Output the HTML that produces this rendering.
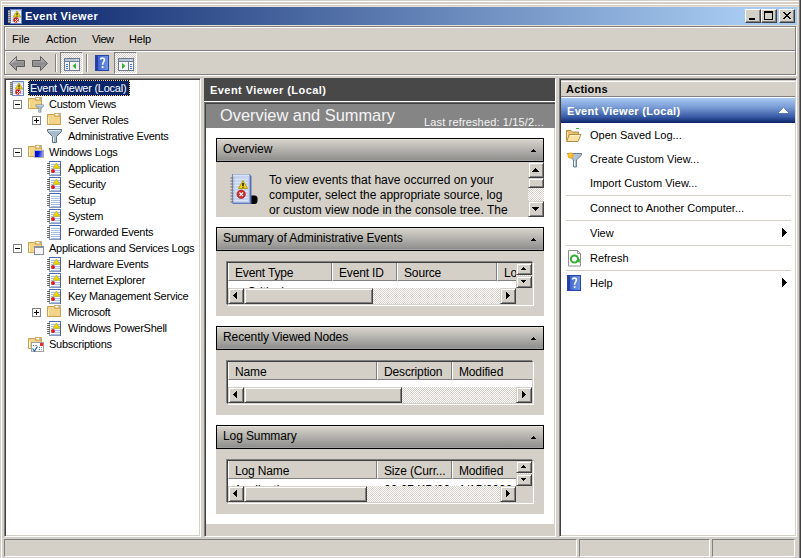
<!DOCTYPE html>
<html><head><meta charset="utf-8">
<style>
*{box-sizing:border-box}
html,body{margin:0;padding:0}
body{width:801px;height:558px;background:#D4D0C8;position:relative;overflow:hidden;font-family:"Liberation Sans",sans-serif;font-size:11px;color:#000}
.a{position:absolute}
.t{position:absolute;white-space:nowrap;line-height:16px}
.cb{position:absolute;top:9px;width:16px;height:14px;background:#D4D0C8;border-top:1px solid #fff;border-left:1px solid #fff;border-right:1px solid #404040;border-bottom:1px solid #404040;box-shadow:inset -1px -1px 0 #808080}
.dith{background-image:repeating-conic-gradient(#fff 0 25%,#D4D0C8 0 50%);background-size:2px 2px}
.ts{letter-spacing:-0.25px}
.b3{position:absolute;background:#D4D0C8;border:1px solid;border-color:#D4D0C8 #404040 #404040 #D4D0C8;box-shadow:inset 1px 1px 0 #fff,inset -1px -1px 0 #808080}
.hc{position:absolute;top:0;height:18px;background:#D4D0C8;border-left:1px solid #fff;border-right:1px solid #808080;border-bottom:1px solid #808080;font-size:12px;line-height:16px;white-space:nowrap;overflow:hidden;letter-spacing:-0.15px}
.sech{position:absolute;left:216px;width:328px;height:24px;border:1px solid #000;background:linear-gradient(#E6E2DC 0,#E6E2DC 1px,#D6D2CA 1px,#8F8F8D 21px,#A0A0A0 21px)}
.sect{position:absolute;left:6px;top:2px;font-size:12px;letter-spacing:-0.1px;line-height:16px;white-space:nowrap;color:#000}
.secc{position:absolute;left:216px;width:328px;background:#D4D0C8}
.lv{position:absolute;left:227px;width:306px;height:43px;background:#fff;border:1px solid;border-color:#404040 #D4D0C8 #D4D0C8 #404040;box-shadow:-1px -1px 0 #808080,1px 1px 0 #fff}
.lvi{position:absolute;left:0;top:0;width:304px;height:41px;overflow:hidden}
.sunk{border-top:1px solid #808080;border-left:1px solid #808080;border-right:1px solid #fff;border-bottom:1px solid #fff}
</style></head>
<body>
<!-- window frame -->
<div class="a" style="left:1px;top:1px;width:798px;height:1px;background:#fff"></div>
<div class="a" style="left:1px;top:4px;width:798px;height:1px;background:#fff"></div>
<div class="a" style="left:1px;top:1px;width:1px;height:557px;background:#fff"></div>
<div class="a" style="left:799px;top:0;width:1px;height:558px;background:#808080"></div>
<div class="a" style="left:800px;top:0;width:1px;height:558px;background:#404040"></div>

<!-- title bar -->
<div class="a" style="left:3px;top:6px;width:795px;height:20px;background:#E4DFD3"></div>
<div class="a" style="left:4px;top:7px;width:793px;height:18px;background:linear-gradient(to right,#0A246A,#A6CAF0 93%)"></div>
<svg class="a" style="left:6px;top:8px" width="16" height="16"><use href="#evico"/></svg>
<div class="t" style="left:25px;top:8px;color:#fff;font-weight:bold;font-size:11px;letter-spacing:0.4px">Event Viewer</div>
<div class="cb" style="left:745px"><div class="a" style="left:3px;top:8px;width:6px;height:2px;background:#000"></div></div>
<div class="cb" style="left:761px"><div class="a" style="left:2px;top:1px;width:9px;height:9px;border:1px solid #000;border-top-width:2px"></div></div>
<div class="cb" style="left:779px"><svg class="a" style="left:3px;top:2px" width="8" height="7"><path d="M0 0h1v1h-1zM1 0h1v1h-1zM6 0h1v1h-1zM7 0h1v1h-1zM1 1h1v1h-1zM2 1h1v1h-1zM5 1h1v1h-1zM6 1h1v1h-1zM2 2h1v1h-1zM3 2h1v1h-1zM4 2h1v1h-1zM5 2h1v1h-1zM3 3h1v1h-1zM4 3h1v1h-1zM2 4h1v1h-1zM3 4h1v1h-1zM4 4h1v1h-1zM5 4h1v1h-1zM1 5h1v1h-1zM2 5h1v1h-1zM5 5h1v1h-1zM6 5h1v1h-1zM0 6h1v1h-1zM1 6h1v1h-1zM6 6h1v1h-1zM7 6h1v1h-1z" fill="#000"/></svg></div>

<!-- menu band -->
<div class="a" style="left:4px;top:26px;width:792px;height:25px;border:1px solid #808080;box-shadow:1px 1px 0 #fff, inset 1px 1px 0 #fff"></div>
<div class="a" style="left:4px;top:50px;width:792px;height:25px;border:1px solid #808080;box-shadow:1px 1px 0 #fff, inset 1px 1px 0 #fff"></div>
<div class="t" style="left:12px;top:31px">File</div>
<div class="t" style="left:46px;top:31px">Action</div>
<div class="t" style="left:92px;top:31px;letter-spacing:-0.6px">View</div>
<div class="t" style="left:129px;top:31px;letter-spacing:-0.2px">Help</div>


<!-- toolbar -->
<svg class="a" style="left:8px;top:55px" width="18" height="17" viewBox="0 0 18 17">
 <defs><linearGradient id="ag" x1="0" y1="0" x2="0" y2="1"><stop offset="0" stop-color="#C8C8C8"/><stop offset=".5" stop-color="#8C8C8C"/><stop offset="1" stop-color="#A8A8A8"/></linearGradient></defs>
 <path d="M1.5 8.5L8.5 1.5V5.5H16.5V11.5H8.5V15.5Z" fill="url(#ag)" stroke="#5E5E5E" stroke-linejoin="round"/>
 <path d="M3 8.5L8 3.5" stroke="#E8E8E8" stroke-width=".8"/>
</svg>
<svg class="a" style="left:31px;top:55px" width="18" height="17" viewBox="0 0 18 17">
 <path d="M16.5 8.5L9.5 1.5V5.5H1.5V11.5H9.5V15.5Z" fill="url(#ag)" stroke="#5E5E5E" stroke-linejoin="round"/>
</svg>
<div class="a" style="left:55px;top:54px;width:1px;height:18px;background:#808080"></div>
<div class="a" style="left:56px;top:54px;width:1px;height:18px;background:#fff"></div>
<div class="a dith" style="left:60px;top:52px;width:23px;height:22px;border-top:1px solid #808080;border-left:1px solid #808080;border-right:1px solid #fff;border-bottom:1px solid #fff"></div>
<svg class="a" style="left:64px;top:58px" width="16" height="13" viewBox="0 0 16 13">
 <rect x=".5" y=".5" width="15" height="12" fill="#F4F4F4" stroke="#6C7C94"/>
 <rect x="1" y="1" width="14" height="2" fill="#B8C4D4"/><path d="M12 2h1M14 2h.5" stroke="#fff"/>
 <path d="M1 3.5h14" stroke="#6C7C94"/>
 <path d="M5.5 4v8" stroke="#6C7C94"/>
 <rect x="2" y="6" width="2" height="1" fill="#3C7CD0"/><rect x="2" y="8" width="2" height="1" fill="#3C7CD0"/><rect x="2" y="10" width="2" height="1" fill="#3C7CD0"/>
 <path d="M8.5 8L12 5V11Z" fill="#30B030"/>
</svg>
<div class="a" style="left:86px;top:54px;width:1px;height:18px;background:#808080"></div>
<div class="a" style="left:87px;top:54px;width:1px;height:18px;background:#fff"></div>
<svg class="a" style="left:95px;top:55px" width="14" height="16" viewBox="0 0 14 16">
 <defs><linearGradient id="hg" x1="0" y1="0" x2="1" y2="0"><stop offset="0" stop-color="#3858C8"/><stop offset="1" stop-color="#7098E8"/></linearGradient></defs>
 <rect x="0" y="0" width="14" height="16" fill="url(#hg)"/>
 <rect x="0" y="0" width="3" height="16" fill="#2440A8"/>
 <rect x=".5" y=".5" width="13" height="15" fill="none" stroke="#2844A8"/>
 <path d="M5.6 4.6C5.6 2.6 9.4 2.4 9.4 4.8C9.4 6.8 7.6 7 7.6 9.8" fill="none" stroke="#fff" stroke-width="1.6"/>
 <rect x="6.7" y="11.2" width="1.8" height="1.9" fill="#fff"/>
</svg>
<div class="a dith" style="left:114px;top:52px;width:23px;height:22px;border-top:1px solid #808080;border-left:1px solid #808080;border-right:1px solid #fff;border-bottom:1px solid #fff"></div>
<svg class="a" style="left:118px;top:58px" width="16" height="13" viewBox="0 0 16 13">
 <rect x=".5" y=".5" width="15" height="12" fill="#F4F4F4" stroke="#6C7C94"/>
 <rect x="1" y="1" width="14" height="2" fill="#B8C4D4"/><path d="M12 2h1M14 2h.5" stroke="#fff"/>
 <path d="M1 3.5h14" stroke="#6C7C94"/>
 <path d="M10.5 4v8" stroke="#6C7C94"/>
 <rect x="12" y="6" width="2" height="1" fill="#3C7CD0"/><rect x="12" y="8" width="2" height="1" fill="#3C7CD0"/><rect x="12" y="10" width="2" height="1" fill="#3C7CD0"/>
 <path d="M7.5 8L4 5V11Z" fill="#30B030"/>
</svg>

<!-- panes -->
<div class="a" style="left:4px;top:78px;width:197px;height:459px;background:#fff;border-top:1px solid #808080;border-left:1px solid #808080;border-right:1px solid #fff;border-bottom:1px solid #fff;box-shadow:inset 1px 1px 0 #404040, inset -1px -1px 0 #D4D0C8"></div>
<div class="a" style="left:204px;top:78px;width:352px;height:459px;background:#fff;border-top:1px solid #808080;border-left:1px solid #808080;border-right:1px solid #fff;border-bottom:1px solid #fff;box-shadow:inset 1px 1px 0 #404040, inset -1px -1px 0 #D4D0C8"></div>
<div class="a" style="left:559px;top:78px;width:238px;height:459px;background:#fff;border-top:1px solid #808080;border-left:1px solid #808080;border-right:1px solid #fff;border-bottom:1px solid #fff;box-shadow:inset 1px 1px 0 #404040, inset -1px -1px 0 #D4D0C8"></div>


<!-- svg defs -->
<svg width="0" height="0" style="position:absolute">
<defs>
<symbol id="evico" viewBox="0 0 16 16">
 <rect x="4" y="1" width="12" height="15" fill="#7088C8"/>
 <rect x="5" y="2" width="10" height="13" fill="#D4E0F4"/>
 <rect x="5" y="4" width="10" height="1" fill="#fff"/><rect x="5" y="6" width="10" height="1" fill="#fff"/><rect x="5" y="8" width="10" height="1" fill="#fff"/><rect x="5" y="10" width="10" height="1" fill="#fff"/><rect x="5" y="12" width="10" height="1" fill="#fff"/><rect x="5" y="14" width="10" height="1" fill="#fff"/>
 <rect x="2" y="2" width="3" height="1" fill="#787878"/><rect x="2" y="4" width="3" height="1" fill="#787878"/><rect x="2" y="6" width="3" height="1" fill="#787878"/><rect x="2" y="8" width="3" height="1" fill="#787878"/><rect x="2" y="10" width="3" height="1" fill="#787878"/><rect x="2" y="12" width="3" height="1" fill="#787878"/><rect x="2" y="14" width="3" height="1" fill="#787878"/>
 <rect x="2" y="3" width="2" height="1" fill="#B8B8B8"/><rect x="2" y="5" width="2" height="1" fill="#B8B8B8"/><rect x="2" y="7" width="2" height="1" fill="#B8B8B8"/><rect x="2" y="9" width="2" height="1" fill="#B8B8B8"/><rect x="2" y="11" width="2" height="1" fill="#B8B8B8"/><rect x="2" y="13" width="2" height="1" fill="#B8B8B8"/>
 <path d="M11 2.8L14.8 9H7.2Z" fill="#EED21A" stroke="#B09000" stroke-width=".6"/>
 <rect x="10.5" y="4.8" width="1.1" height="2.4" fill="#303020"/><rect x="10.5" y="7.7" width="1.1" height="1" fill="#303020"/>
 <circle cx="10" cy="12" r="2.8" fill="#D42222"/>
 <path d="M9 11h1v1h-1zM11 11h1v1h-1zM10 12h1v1h-1zM9 13h1v1h-1zM11 13h1v1h-1z" fill="#fff" opacity=".9"/>
</symbol>
<symbol id="logA" viewBox="0 0 16 16"><rect x="3" y="1" width="12" height="15" fill="#4A66B8"/><rect x="4" y="2" width="10" height="13" fill="#fff"/><rect x="3" y="2" width="1" height="14" fill="#8898C0"/><rect x="3" y="15" width="11" height="1" fill="#8898C0"/><rect x="5" y="4" width="9" height="1" fill="#A4BCE4"/><rect x="5" y="6" width="9" height="1" fill="#A4BCE4"/><rect x="5" y="8" width="9" height="1" fill="#A4BCE4"/><rect x="5" y="10" width="9" height="1" fill="#A4BCE4"/><rect x="5" y="12" width="9" height="1" fill="#A4BCE4"/><rect x="5" y="14" width="9" height="1" fill="#A4BCE4"/><rect x="1" y="3" width="3" height="1" fill="#686868"/><rect x="1" y="5" width="3" height="1" fill="#686868"/><rect x="1" y="7" width="3" height="1" fill="#686868"/><rect x="1" y="9" width="3" height="1" fill="#686868"/><rect x="1" y="11" width="3" height="1" fill="#686868"/><rect x="1" y="13" width="3" height="1" fill="#686868"/>
 <path d="M10.5 3L13.8 8.2H7.2Z" fill="#F2D800" stroke="#C8A800" stroke-width=".6"/>
 <circle cx="7" cy="11" r="2" fill="#D82020"/>
</symbol>
<symbol id="logB" viewBox="0 0 16 16"><rect x="3" y="1" width="12" height="15" fill="#4A66B8"/><rect x="4" y="2" width="10" height="13" fill="#fff"/><rect x="3" y="2" width="1" height="14" fill="#8898C0"/><rect x="3" y="15" width="11" height="1" fill="#8898C0"/><rect x="5" y="4" width="9" height="1" fill="#A4BCE4"/><rect x="5" y="6" width="9" height="1" fill="#A4BCE4"/><rect x="5" y="8" width="9" height="1" fill="#A4BCE4"/><rect x="5" y="10" width="9" height="1" fill="#A4BCE4"/><rect x="5" y="12" width="9" height="1" fill="#A4BCE4"/><rect x="5" y="14" width="9" height="1" fill="#A4BCE4"/><rect x="1" y="3" width="3" height="1" fill="#686868"/><rect x="1" y="5" width="3" height="1" fill="#686868"/><rect x="1" y="7" width="3" height="1" fill="#686868"/><rect x="1" y="9" width="3" height="1" fill="#686868"/><rect x="1" y="11" width="3" height="1" fill="#686868"/><rect x="1" y="13" width="3" height="1" fill="#686868"/></symbol>
<symbol id="fold" viewBox="0 0 16 16">
 <path d="M1.5 2.5h6l1 1.5h6v8.5h-13z" fill="#F3D58A" stroke="#C9A152"/>
 <rect x="8.5" y="1.5" width="6" height="2.5" fill="#F8E6B0" stroke="#C9A152" stroke-width=".8"/>
 <path d="M10 2.7h2.5" stroke="#fff" stroke-width="1"/><path d="M12.5 2.7h1.3" stroke="#4A8AD8" stroke-width="1"/>
 <path d="M2.5 5v7" stroke="#FFF2C0" stroke-width="1"/>
</symbol>
<symbol id="funnel" viewBox="0 0 16 16">
 <path d="M1.5 1.5h14v2l-5 5v6h-4v-6l-5-5z" fill="#A8BCCC" stroke="#5C7080"/>
 <path d="M2.5 2.6h12" stroke="#E0ECF4" stroke-width="1"/>
 <path d="M7.5 9v5" stroke="#E8F0F8" stroke-width="1"/>
</symbol>
<symbol id="exm" viewBox="0 0 9 9"><rect x=".5" y=".5" width="8" height="8" fill="#fff" stroke="#808080"/><path d="M2 4.5h5" stroke="#000"/></symbol>
<symbol id="exp" viewBox="0 0 9 9"><rect x=".5" y=".5" width="8" height="8" fill="#fff" stroke="#808080"/><path d="M2 4.5h5M4.5 2v5" stroke="#000"/></symbol>
</defs></svg>

<!-- tree -->
<svg class="a" style="left:8px;top:80px" width="16" height="16"><use href="#evico"/></svg>
<div class="a" style="left:28px;top:80px;width:102px;height:16px;background:#0A246A;border:1px solid #000;outline:1px dotted #F5DB95;outline-offset:-1px"></div>
<div class="t ts" style="left:30px;top:80px;color:#fff">Event Viewer (Local)</div>

<svg class="a" style="left:13px;top:100px" width="9" height="9"><use href="#exm"/></svg>
<svg class="a" style="left:27px;top:96px" width="16" height="16"><use href="#fold"/></svg>
<svg class="a" style="left:35px;top:104px" width="9" height="9" viewBox="0 0 16 16"><use href="#funnel"/></svg>
<div class="t ts" style="left:49px;top:96px">Custom Views</div>

<svg class="a" style="left:32px;top:116px" width="9" height="9"><use href="#exp"/></svg>
<svg class="a" style="left:46px;top:112px" width="16" height="16"><use href="#fold"/></svg>
<div class="t ts" style="left:68px;top:112px">Server Roles</div>

<svg class="a" style="left:46px;top:128px" width="16" height="16"><use href="#funnel"/></svg>
<div class="t ts" style="left:68px;top:128px">Administrative Events</div>

<svg class="a" style="left:13px;top:148px" width="9" height="9"><use href="#exm"/></svg>
<svg class="a" style="left:27px;top:144px" width="16" height="16"><use href="#fold"/></svg>
<div class="a" style="left:34px;top:150px;width:10px;height:8px;background:#D8D8D8;border:1px solid #B0B0B0"><div class="a" style="left:0;top:0;width:8px;height:6px;background:linear-gradient(100deg,#0010D0 40%,#A0B0F8)"></div></div>
<div class="t ts" style="left:49px;top:144px">Windows Logs</div>

<svg class="a" style="left:46px;top:160px" width="16" height="16"><use href="#logA"/></svg>
<div class="t ts" style="left:68px;top:160px">Application</div>
<svg class="a" style="left:46px;top:176px" width="16" height="16"><use href="#logA"/></svg>
<div class="t ts" style="left:68px;top:176px">Security</div>
<svg class="a" style="left:46px;top:192px" width="16" height="16"><use href="#logB"/></svg>
<div class="t ts" style="left:68px;top:192px">Setup</div>
<svg class="a" style="left:46px;top:208px" width="16" height="16"><use href="#logA"/></svg>
<div class="t ts" style="left:68px;top:208px">System</div>
<svg class="a" style="left:46px;top:224px" width="16" height="16"><use href="#logB"/></svg>
<div class="t ts" style="left:68px;top:224px">Forwarded Events</div>

<svg class="a" style="left:13px;top:244px" width="9" height="9"><use href="#exm"/></svg>
<svg class="a" style="left:27px;top:240px" width="16" height="16"><use href="#fold"/></svg>
<div class="a" style="left:34px;top:246px;width:10px;height:9px;background:#F4F4F4;border:1px solid #8890A0;border-top-width:2px"></div>
<div class="t ts" style="left:49px;top:240px">Applications and Services Logs</div>

<svg class="a" style="left:46px;top:256px" width="16" height="16"><use href="#logA"/></svg>
<div class="t ts" style="left:68px;top:256px">Hardware Events</div>
<svg class="a" style="left:46px;top:272px" width="16" height="16"><use href="#logA"/></svg>
<div class="t ts" style="left:68px;top:272px">Internet Explorer</div>
<svg class="a" style="left:46px;top:288px" width="16" height="16"><use href="#logA"/></svg>
<div class="t ts" style="left:68px;top:288px">Key Management Service</div>
<svg class="a" style="left:32px;top:308px" width="9" height="9"><use href="#exp"/></svg>
<svg class="a" style="left:46px;top:304px" width="16" height="16"><use href="#fold"/></svg>
<div class="t ts" style="left:68px;top:304px">Microsoft</div>
<svg class="a" style="left:46px;top:320px" width="16" height="16"><use href="#logA"/></svg>
<div class="t ts" style="left:68px;top:320px">Windows PowerShell</div>

<svg class="a" style="left:27px;top:336px" width="16" height="16"><use href="#fold"/></svg>
<div class="a" style="left:31px;top:342px;width:13px;height:10px;background:#fff;border:1px solid #A0A0A0"></div>
<svg class="a" style="left:31px;top:342px" width="13" height="10" viewBox="0 0 13 10">
 <rect x="9" y="1" width="3" height="3" fill="#F02828"/>
 <rect x="2" y="3" width="1" height="1" fill="#2A7ED0"/><rect x="4" y="3" width="2" height="1" fill="#9090B0"/>
 <rect x="5" y="5" width="1" height="1" fill="#2A7ED0"/><rect x="8" y="5" width="1" height="1" fill="#2A7ED0"/><rect x="10" y="5" width="1" height="1" fill="#9090B0"/>
 <rect x="8" y="7" width="1" height="1" fill="#2A7ED0"/><rect x="10" y="7" width="1" height="1" fill="#9090B0"/>
 <path d="M1.5 6.5l2 2.5l3-4.5" fill="none" stroke="#1E60B8" stroke-width="1.2"/>
</svg>
<div class="t ts" style="left:49px;top:336px">Subscriptions</div>


<!-- middle pane -->
<div class="a" style="left:204px;top:78px;width:351px;height:23px;background:#484848"></div>
<div class="t" style="left:210px;top:82px;color:#fff;font-weight:bold;font-size:11px;letter-spacing:0.45px">Event Viewer (Local)</div>
<div class="a" style="left:204px;top:101px;width:352px;height:1px;background:#fff"></div>
<div class="a" style="left:204px;top:102px;width:351px;height:1px;background:#6A6A6A"></div>
<div class="a" style="left:205px;top:103px;width:350px;height:1px;background:#404040"></div>
<div class="a" style="left:206px;top:104px;width:349px;height:24px;background:#858585"></div>
<div class="t" style="left:220px;top:105px;color:#F4F4F4;font-size:16.4px;line-height:20px">Overview and Summary</div>
<div class="t" style="left:424px;top:114px;color:#F4F4F4;font-size:11px;letter-spacing:0.15px">Last refreshed: 1/15/2...</div>
<div class="a" style="left:206px;top:524px;width:348px;height:11px;background:#D4D0C8"></div>

<!-- section 1 -->
<div class="sech" style="top:138px"><div class="sect">Overview</div><svg class="a" style="left:314px;top:10px" width="5" height="3"><path d="M2 0h1v1h-1zM1 1h3v1h-3zM0 2h5v1h-5z" fill="#000"/></svg></div>
<div class="secc" style="top:162px;height:55px;overflow:hidden">
 <svg class="a" style="left:12px;top:10px" width="32" height="32" viewBox="0 0 32 32">
  <path d="M23 23.5h3.5a3 3 0 0 1 3 3v2.5a3 3 0 0 1-3 3h-3.5z" fill="#000"/>
  <path d="M5 2.5h16.5l2 1.5v28h-18.5z" fill="#5A70B0"/>
  <rect x="4.5" y="2.5" width="17" height="28.5" fill="#C4D4EE" stroke="#7088C4"/>
  <path d="M5 3h16" stroke="#E8F0FA"/>
  <path d="M7 7.5h13M7 10.5h13M7 13.5h13M7 16.5h13M7 19.5h13M7 22.5h13M7 25.5h13M7 28.5h13" stroke="#DCE6F6"/>
  <path d="M21.5 3v28" stroke="#9AAAD8"/>
  <path d="M2.5 6h3" stroke="#7A7A7A" stroke-width="1.2"/><path d="M2.5 9h3" stroke="#7A7A7A" stroke-width="1.2"/><path d="M2.5 12h3" stroke="#7A7A7A" stroke-width="1.2"/><path d="M2.5 15h3" stroke="#7A7A7A" stroke-width="1.2"/><path d="M2.5 18h3" stroke="#7A7A7A" stroke-width="1.2"/><path d="M2.5 21h3" stroke="#7A7A7A" stroke-width="1.2"/><path d="M2.5 24h3" stroke="#7A7A7A" stroke-width="1.2"/><path d="M2.5 27h3" stroke="#7A7A7A" stroke-width="1.2"/><path d="M2.5 30h3" stroke="#7A7A7A" stroke-width="1.2"/>
  <path d="M15 8.5L19.6 16.5H10.4Z" fill="#F2D41A" stroke="#A88C00" stroke-width=".8"/>
  <path d="M15 11v3M15 14.8v1" stroke="#000" stroke-width="1.3"/>
  <circle cx="13.2" cy="22.3" r="4.2" fill="#D42A2A" stroke="#A81818" stroke-width=".6"/>
  <path d="M11.4 20.5l3.6 3.6M15 20.5l-3.6 3.6" stroke="#fff" stroke-width="1.3"/>
 </svg>
 <div class="a" style="left:53px;top:11px;font-size:12px;line-height:15px;white-space:nowrap">To view events that have occurred on your<br>computer, select the appropriate source, log<br>or custom view node in the console tree. The</div>
 <div class="a dith" style="left:312px;top:0;width:16px;height:55px"></div>
 <div class="b3" style="left:312px;top:0;width:16px;height:16px"><svg class="a" style="left:3px;top:5px" width="7" height="4"><path d="M3 0h1v1h-1zM2 1h3v1h-3zM1 2h5v1h-5zM0 3h7v1h-7z" fill="#000"/></svg></div>
 <div class="b3" style="left:312px;top:16px;width:16px;height:10px"></div>
 <div class="b3" style="left:312px;top:39px;width:16px;height:16px"><svg class="a" style="left:3px;top:5px" width="7" height="4"><path d="M3 3h1v1h-1zM2 2h3v1h-3zM1 1h5v1h-5zM0 0h7v1h-7z" fill="#000"/></svg></div>
</div>

<!-- section 2 -->
<div class="sech" style="top:227px"><div class="sect">Summary of Administrative Events</div><svg class="a" style="left:314px;top:10px" width="5" height="3"><path d="M2 0h1v1h-1zM1 1h3v1h-3zM0 2h5v1h-5z" fill="#000"/></svg></div>
<div class="secc" style="top:251px;height:65px"></div>
<div class="lv" style="top:262px"><div class="lvi"><div class="hc" style="left:0px;width:104px"><span class="a" style="left:6px;top:2px">Event Type</span></div><div class="hc" style="left:104px;width:65px"><span class="a" style="left:6px;top:2px">Event ID</span></div><div class="hc" style="left:169px;width:100px"><span class="a" style="left:6px;top:2px">Source</span></div><div class="hc" style="left:269px;width:104px"><span class="a" style="left:6px;top:2px">Log</span></div><div class="a" style="left:6px;top:21px;font-size:12px;line-height:16px;white-space:nowrap;color:#000">&nbsp;&nbsp;&nbsp;&nbsp;Critical</div><div class="a dith" style="left:0;top:25px;width:288px;height:16px"></div><div class="b3" style="left:0;top:25px;width:16px;height:16px"><svg class="a" style="left:4px;top:3px" width="4" height="7"><path d="M0 3h1v1h-1zM1 2h1v3h-1zM2 1h1v5h-1zM3 0h1v7h-1z" fill="#000"/></svg></div><div class="b3" style="left:16px;top:25px;width:129px;height:16px"></div><div class="b3" style="left:272px;top:25px;width:16px;height:16px"><svg class="a" style="left:5px;top:3px" width="4" height="7"><path d="M3 3h1v1h-1zM2 2h1v3h-1zM1 1h1v5h-1zM0 0h1v7h-1z" fill="#000"/></svg></div><div class="a" style="left:288px;top:25px;width:16px;height:16px;background:#D4D0C8"></div><div class="a dith" style="left:288px;top:0;width:16px;height:25px"></div><div class="b3" style="left:288px;top:0;width:16px;height:12px"><svg class="a" style="left:4px;top:3px" width="5" height="3"><path d="M2 0h1v1h-1zM1 1h3v1h-3zM0 2h5v1h-5z" fill="#000"/></svg></div><div class="b3" style="left:288px;top:13px;width:16px;height:12px"><svg class="a" style="left:4px;top:3px" width="5" height="3"><path d="M2 2h1v1h-1zM1 1h3v1h-3zM0 0h5v1h-5z" fill="#000"/></svg></div></div></div>
<!-- section 3 -->
<div class="sech" style="top:326px"><div class="sect">Recently Viewed Nodes</div><svg class="a" style="left:314px;top:10px" width="5" height="3"><path d="M2 0h1v1h-1zM1 1h3v1h-3zM0 2h5v1h-5z" fill="#000"/></svg></div>
<div class="secc" style="top:350px;height:65px"></div>
<div class="lv" style="top:361px"><div class="lvi"><div class="hc" style="left:0px;width:149px"><span class="a" style="left:6px;top:2px">Name</span></div><div class="hc" style="left:149px;width:75px"><span class="a" style="left:6px;top:2px">Description</span></div><div class="hc" style="left:224px;width:109px"><span class="a" style="left:6px;top:2px">Modified</span></div><div class="a dith" style="left:0;top:25px;width:288px;height:16px"></div><div class="b3" style="left:0;top:25px;width:16px;height:16px"><svg class="a" style="left:4px;top:3px" width="4" height="7"><path d="M0 3h1v1h-1zM1 2h1v3h-1zM2 1h1v5h-1zM3 0h1v7h-1z" fill="#000"/></svg></div><div class="b3" style="left:16px;top:25px;width:158px;height:16px"></div><div class="a dith" style="left:288px;top:25px;width:16px;height:16px"></div><div class="b3" style="left:288px;top:25px;width:16px;height:16px"><svg class="a" style="left:5px;top:3px" width="4" height="7"><path d="M3 3h1v1h-1zM2 2h1v3h-1zM1 1h1v5h-1zM0 0h1v7h-1z" fill="#000"/></svg></div></div></div>
<!-- section 4 -->
<div class="sech" style="top:425px"><div class="sect">Log Summary</div><svg class="a" style="left:314px;top:10px" width="5" height="3"><path d="M2 0h1v1h-1zM1 1h3v1h-3zM0 2h5v1h-5z" fill="#000"/></svg></div>
<div class="secc" style="top:449px;height:65px"></div>
<div class="lv" style="top:460px"><div class="lvi"><div class="hc" style="left:0px;width:149px"><span class="a" style="left:6px;top:2px">Log Name</span></div><div class="hc" style="left:149px;width:75px"><span class="a" style="left:6px;top:2px">Size (Curr...</span></div><div class="hc" style="left:224px;width:109px"><span class="a" style="left:6px;top:2px">Modified</span></div><div class="a" style="left:6px;top:21px;font-size:12px;line-height:16px;white-space:nowrap;color:#000">Application</div><div class="a" style="left:156px;top:21px;font-size:12px;line-height:16px;white-space:nowrap">20.07 KB/20</div><div class="a" style="left:231px;top:21px;font-size:12px;line-height:16px;white-space:nowrap">1/15/2008 1</div><div class="a dith" style="left:0;top:25px;width:288px;height:16px"></div><div class="b3" style="left:0;top:25px;width:16px;height:16px"><svg class="a" style="left:4px;top:3px" width="4" height="7"><path d="M0 3h1v1h-1zM1 2h1v3h-1zM2 1h1v5h-1zM3 0h1v7h-1z" fill="#000"/></svg></div><div class="b3" style="left:16px;top:25px;width:123px;height:16px"></div><div class="b3" style="left:272px;top:25px;width:16px;height:16px"><svg class="a" style="left:5px;top:3px" width="4" height="7"><path d="M3 3h1v1h-1zM2 2h1v3h-1zM1 1h1v5h-1zM0 0h1v7h-1z" fill="#000"/></svg></div><div class="a" style="left:288px;top:25px;width:16px;height:16px;background:#D4D0C8"></div><div class="a dith" style="left:288px;top:0;width:16px;height:25px"></div><div class="b3" style="left:288px;top:0;width:16px;height:12px"><svg class="a" style="left:4px;top:3px" width="5" height="3"><path d="M2 0h1v1h-1zM1 1h3v1h-3zM0 2h5v1h-5z" fill="#000"/></svg></div><div class="b3" style="left:288px;top:13px;width:16px;height:12px"><svg class="a" style="left:4px;top:3px" width="5" height="3"><path d="M2 2h1v1h-1zM1 1h3v1h-3zM0 0h5v1h-5z" fill="#000"/></svg></div></div></div>


<!-- actions pane -->
<div class="a" style="left:561px;top:80px;width:234px;height:17px;background:#D4D0C8;border-top:1px solid #D4D0C8;box-shadow:inset 0 1px 0 #fff;border-bottom:1px solid #808080"></div>
<div class="a" style="left:561px;top:97px;width:234px;height:1px;background:#fff"></div>
<div class="t" style="left:566px;top:81px;font-weight:bold;font-size:11px;letter-spacing:0.2px">Actions</div>
<div class="a" style="left:561px;top:98px;width:234px;height:25px;background:linear-gradient(#A8CAF2,#7C9ED8 35%,#3A5CA6 75%,#0A246A)"></div>
<div class="t" style="left:567px;top:103px;color:#fff;font-weight:bold;font-size:11px;letter-spacing:0.3px">Event Viewer (Local)</div>
<svg class="a" style="left:779px;top:108px" width="9" height="5"><path d="M4 0h1v1h-1zM3 1h3v1h-3zM2 2h5v1h-5zM1 3h7v1h-7zM0 4h9v1h-9z" fill="#fff"/></svg>

<svg class="a" style="left:565px;top:126px" width="17" height="17" viewBox="0 0 17 17">
 <path d="M11 2.5h3" stroke="#30C030"/>
 <path d="M1.5 4.5h4.5l1.5 1.5h6v8.5h-12z" fill="#E6C272" stroke="#B48C44"/>
 <path d="M2.5 6v7" stroke="#F8E4A8"/>
 <path d="M1.5 15.5L4.5 8.5h11.5l-3 7z" fill="#F8E2A4" stroke="#B48C44"/>
 <path d="M5 9.6h10" stroke="#FFF4D0"/>
</svg>
<div class="t" style="left:590px;top:127px">Open Saved Log...</div>
<svg class="a" style="left:566px;top:152px" width="17" height="16" viewBox="0 0 17 16">
 <path d="M1.5 1.5h14v1.5l-5 5v7h-3v-7l-5-5z" fill="#B0C4D4" stroke="#607484" stroke-width=".9"/>
 <path d="M8.5 9v5" stroke="#E8F0F8"/>
 <circle cx="4.6" cy="3.6" r="3" fill="#F8A820"/><circle cx="4.3" cy="3.2" r="1.6" fill="#FFD040"/>
</svg>
<div class="t" style="left:590px;top:151px">Create Custom View...</div>
<div class="t" style="left:590px;top:175px">Import Custom View...</div>
<div class="a" style="left:566px;top:195px;width:225px;height:1px;background:#D4D0C8"></div>
<div class="t" style="left:590px;top:200px">Connect to Another Computer...</div>
<div class="a" style="left:566px;top:220px;width:225px;height:1px;background:#D4D0C8"></div>
<div class="t" style="left:590px;top:225px">View</div>
<svg class="a" style="left:782px;top:228px" width="5" height="9"><path d="M4 4h1v1h-1zM3 3h1v3h-1zM2 2h1v5h-1zM1 1h1v7h-1zM0 0h1v9h-1z" fill="#000"/></svg>
<div class="a" style="left:566px;top:245px;width:225px;height:1px;background:#D4D0C8"></div>
<svg class="a" style="left:567px;top:250px" width="16" height="17" viewBox="0 0 16 17">
 <path d="M1.5 .5h9l3 3v12.5h-12z" fill="#fff" stroke="#909090"/>
 <path d="M10.5 .5v3h3" fill="none" stroke="#909090"/>
 <circle cx="7.5" cy="9" r="3.6" fill="none" stroke="#30B030" stroke-width="2"/>
 <path d="M9 10.5l3.5 2.5l.5-4z" fill="#30B030"/>
</svg>
<div class="t" style="left:590px;top:250px">Refresh</div>
<div class="a" style="left:566px;top:270px;width:225px;height:1px;background:#D4D0C8"></div>
<svg class="a" style="left:567px;top:275px" width="14" height="16" viewBox="0 0 14 16">
 <rect x="0" y="0" width="14" height="16" fill="url(#hg)"/>
 <rect x="0" y="0" width="3" height="16" fill="#2440A8"/>
 <rect x=".5" y=".5" width="13" height="15" fill="none" stroke="#2844A8"/>
 <path d="M5.6 4.6C5.6 2.6 9.4 2.4 9.4 4.8C9.4 6.8 7.6 7 7.6 9.8" fill="none" stroke="#fff" stroke-width="1.6"/>
 <rect x="6.7" y="11.2" width="1.8" height="1.9" fill="#fff"/>
</svg>
<div class="t" style="left:590px;top:275px">Help</div>
<svg class="a" style="left:782px;top:278px" width="5" height="9"><path d="M4 4h1v1h-1zM3 3h1v3h-1zM2 2h1v5h-1zM1 1h1v7h-1zM0 0h1v9h-1z" fill="#000"/></svg>

<!-- status bar -->
<div class="a sunk" style="left:4px;top:539px;width:573px;height:18px"></div>
<div class="a sunk" style="left:579px;top:539px;width:131px;height:18px"></div>
<div class="a sunk" style="left:712px;top:539px;width:83px;height:18px"></div>

</body></html>
